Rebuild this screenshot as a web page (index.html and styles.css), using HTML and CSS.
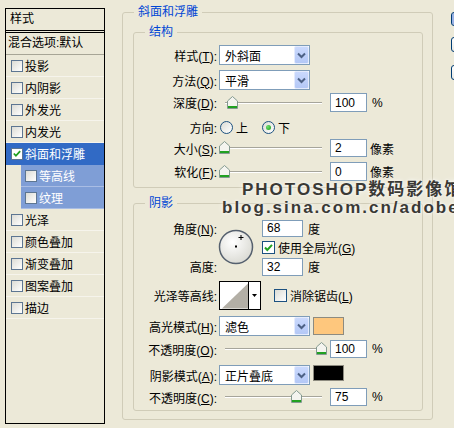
FILE: index.html
```html
<!DOCTYPE html>
<html lang="zh">
<head>
    <meta charset="UTF-8">
    <title>图层样式 - 斜面和浮雕</title>
    <link rel="stylesheet" href="styles.css">
</head>
<body>
    <div class="dialog">
        <!-- 左侧样式列表 -->
        <div class="style-list">
            <div class="list-head">样式</div>
            <div class="list-blend">混合选项:默认</div>
            <div class="list-item"><span class="cb"></span>投影</div>
            <div class="list-item"><span class="cb"></span>内阴影</div>
            <div class="list-item"><span class="cb"></span>外发光</div>
            <div class="list-item"><span class="cb"></span>内发光</div>
            <div class="list-item on">
                <span class="cb checked"><svg width="11" height="11" viewBox="0 0 11 11"><path d="M2 5.5 L4.3 8 L9 2.8" fill="none" stroke="#21a121" stroke-width="2"/></svg></span>斜面和浮雕
            </div>
            <div class="list-item sub"><span class="cb"></span>等高线</div>
            <div class="list-item sub"><span class="cb"></span>纹理</div>
            <div class="list-item"><span class="cb"></span>光泽</div>
            <div class="list-item"><span class="cb"></span>颜色叠加</div>
            <div class="list-item"><span class="cb"></span>渐变叠加</div>
            <div class="list-item"><span class="cb"></span>图案叠加</div>
            <div class="list-item"><span class="cb"></span>描边</div>
        </div>

        <!-- 斜面和浮雕 面板 -->
        <div class="main">
            <fieldset class="group outer">
                <legend>斜面和浮雕</legend>

                <fieldset class="group inner structure">
                    <legend>结构</legend>
                    <div class="row r-style">
                        <span class="lbl">样式(<u>T</u>):</span>
                        <div class="select"><span>外斜面</span><span class="arrow"><svg width="15" height="18" viewBox="0 0 15 18"><path d="M4 7.5 L7.5 11 L11 7.5" fill="none" stroke="#4d6185" stroke-width="2"/></svg></span></div>
                    </div>
                    <div class="row r-method">
                        <span class="lbl">方法(<u>Q</u>):</span>
                        <div class="select"><span>平滑</span><span class="arrow"><svg width="15" height="18" viewBox="0 0 15 18"><path d="M4 7.5 L7.5 11 L11 7.5" fill="none" stroke="#4d6185" stroke-width="2"/></svg></span></div>
                    </div>
                    <div class="row r-depth">
                        <span class="lbl">深度(<u>D</u>):</span>
                        <div class="slider"><span class="track"></span><span class="thumb" style="left: 8px"></span></div>
                        <div class="num">100</div>
                        <span class="unit">%</span>
                    </div>
                    <div class="row r-dir">
                        <span class="lbl">方向:</span>
                        <span class="radio"></span><span class="opt">上</span>
                        <span class="radio checked"></span><span class="opt">下</span>
                    </div>
                    <div class="row r-size">
                        <span class="lbl">大小(<u>S</u>):</span>
                        <div class="slider"><span class="track"></span><span class="thumb" style="left: 0px"></span></div>
                        <div class="num">2</div>
                        <span class="unit px">像素</span>
                    </div>
                    <div class="row r-soft">
                        <span class="lbl">软化(<u>F</u>):</span>
                        <div class="slider"><span class="track"></span><span class="thumb" style="left: 0px"></span></div>
                        <div class="num">0</div>
                        <span class="unit px">像素</span>
                    </div>
                </fieldset>

                <fieldset class="group inner shading">
                    <legend>阴影</legend>
                    <div class="angle-grid">
                        <span class="lbl">角度(<u>N</u>):</span>
                        <div class="dial">
                            <svg width="36" height="36" viewBox="0 0 36 36">
                                <defs>
                                    <radialGradient id="dialFill" cx="40%" cy="35%" r="70%">
                                        <stop offset="0" stop-color="#ffffff"/>
                                        <stop offset="1" stop-color="#d9d9d2"/>
                                    </radialGradient>
                                </defs>
                                <circle cx="18" cy="18" r="16.5" fill="url(#dialFill)" stroke="#55606e" stroke-width="1.5"/>
                                <path d="M23 6 V11 M20.5 8.5 H25.5" stroke="#000" stroke-width="1"/>
                                <rect x="17" y="16.5" width="2" height="2" fill="#000"/>
                            </svg>
                        </div>
                        <div class="cell"><div class="num short">68</div><span class="unit">度</span></div>
                        <div class="cell"><span class="cb dlg checked"><svg width="11" height="11" viewBox="0 0 11 11"><path d="M2 5.5 L4.3 8 L9 2.8" fill="none" stroke="#21a121" stroke-width="2"/></svg></span><span class="cb-text">使用全局光(<u>G</u>)</span></div>
                        <span class="lbl lbl-alt">高度:</span>
                        <div class="cell"><div class="num short tall">32</div><span class="unit">度</span></div>
                    </div>
                    <div class="row r-contour">
                        <span class="lbl">光泽等高线:</span>
                        <div class="contour">
                            <svg width="29" height="27" viewBox="0 0 29 27"><polygon points="2,27 29,27 29,1" fill="#b3afa6"/></svg>
                            <span class="contour-drop"><svg width="11" height="27" viewBox="0 0 11 27"><polygon points="3,12 8,12 5.5,15" fill="#000"/></svg></span>
                        </div>
                        <span class="cb dlg aa"></span><span class="cb-text">消除锯齿(<u>L</u>)</span>
                    </div>
                    <div class="row r-hmode">
                        <span class="lbl">高光模式(<u>H</u>):</span>
                        <div class="select"><span>滤色</span><span class="arrow"><svg width="15" height="18" viewBox="0 0 15 18"><path d="M4 7.5 L7.5 11 L11 7.5" fill="none" stroke="#4d6185" stroke-width="2"/></svg></span></div>
                        <span class="swatch hl"></span>
                    </div>
                    <div class="row r-hop">
                        <span class="lbl">不透明度(<u>O</u>):</span>
                        <div class="slider"><span class="track"></span><span class="thumb" style="left: 97px"></span></div>
                        <div class="num">100</div>
                        <span class="unit">%</span>
                    </div>
                    <div class="row r-smode">
                        <span class="lbl">阴影模式(<u>A</u>):</span>
                        <div class="select"><span>正片叠底</span><span class="arrow"><svg width="15" height="18" viewBox="0 0 15 18"><path d="M4 7.5 L7.5 11 L11 7.5" fill="none" stroke="#4d6185" stroke-width="2"/></svg></span></div>
                        <span class="swatch sh"></span>
                    </div>
                    <div class="row r-sop">
                        <span class="lbl">不透明度(<u>C</u>):</span>
                        <div class="slider"><span class="track"></span><span class="thumb" style="left: 72px"></span></div>
                        <div class="num">75</div>
                        <span class="unit">%</span>
                    </div>
                </fieldset>
            </fieldset>
        </div>

        <!-- 右侧按钮（被裁切） -->
        <div class="buttons">
            <span class="btn default"></span>
            <span class="btn b2"></span>
            <span class="btn b3"></span>
        </div>
    </div>

    <div class="watermark">
        <div class="wm-1">PHOTOSHOP数码影像馆</div>
        <div class="wm-2">blog.sina.com.cn/adobe</div>
    </div>
</body>
</html>
```
FILE: styles.css
```css
body {
    margin: 0;
    width: 454px;
    height: 428px;
    overflow: hidden;
    position: relative;
    background-color: #ece9d8;
    font-family: "Liberation Sans", "Noto Sans CJK SC", sans-serif;
    font-size: 12px;
    color: #000;
}
u {
    text-decoration: underline;
}
.dialog {
    display: flex;
    align-items: flex-start;
    padding: 8px 0 0 5px;
}

/* 左侧样式列表 */
.style-list {
    flex: none;
    width: 100px;
    height: 416px;
    box-sizing: border-box;
    border: 1px solid #000;
}
.list-head {
    height: 21px;
    line-height: 21px;
    padding-left: 4px;
    border-bottom: 3px double #000;
}
.list-blend {
    height: 21px;
    line-height: 21px;
    padding-left: 2px;
    border-bottom: 1px solid #a7a596;
}
.list-item {
    height: 22px;
    box-sizing: border-box;
    display: flex;
    align-items: center;
    padding-left: 5px;
    border-bottom: 1px solid #f6f4ec;
}
.list-item.on {
    background-color: #316ac5;
    color: #fff;
    border-bottom-color: #316ac5;
}
.list-item.sub {
    margin-left: 15px;
    padding-left: 4px;
    background-color: #7f9ed6;
    color: #fff;
    border-bottom-color: #a9bde4;
}
.cb {
    flex: none;
    width: 12px;
    height: 12px;
    box-sizing: border-box;
    margin-right: 2px;
    border: 1px solid #5d7692;
    background: linear-gradient(135deg, #dcdcd5, #ffffff);
    display: flex;
    align-items: center;
    justify-content: center;
}
.cb.checked {
    background: #fff;
}
.cb.dlg {
    width: 13px;
    height: 13px;
    border-color: #1c5180;
    margin-right: 3px;
}

/* 主面板 */
.main {
    margin-left: 17px;
    margin-top: -4px;
}
.group {
    margin: 0;
    min-width: 0;
    border: 1px solid #d0ccb8;
    border-radius: 3px;
}
.group legend {
    padding: 0 4px;
    line-height: 16px;
    color: #0046d5;
}
.outer {
    width: 311px;
    box-sizing: border-box;
    padding: 4px 9px 8px 10px;
}
.outer > legend {
    margin-left: 1px;
}
.inner {
    padding: 0 0 6px 0;
}
.inner > legend {
    margin-left: 11px;
}
.shading {
    margin-top: 7px;
    padding-bottom: 4px;
}

.row {
    display: flex;
    align-items: center;
}
.lbl {
    flex: none;
    width: 83px;
    margin-right: 2px;
    text-align: right;
    white-space: nowrap;
}
.r-style  { margin-top: 5px; height: 20px; }
.r-method { margin-top: 5px; height: 20px; }
.r-depth  { margin-top: 3px; height: 19px; }
.r-dir    { margin-top: 6px; height: 18px; }
.r-size   { margin-top: 3px; height: 18px; }
.r-soft   { margin-top: 5px; height: 19px; }

/* 下拉框 */
.select {
    flex: none;
    width: 91px;
    height: 20px;
    box-sizing: border-box;
    border: 1px solid #7f9db9;
    background: #fff;
    display: flex;
    align-items: center;
    padding-left: 5px;
}
.select .arrow {
    margin-left: auto;
    width: 15px;
    height: 18px;
    box-sizing: border-box;
    border: 1px solid #e4ebfd;
    border-radius: 2px;
    background: linear-gradient(#cad9fd, #b4c8f6);
    display: flex;
}
.select .arrow svg {
    margin: -1px;
}

/* 滑块 */
.slider {
    flex: none;
    position: relative;
    width: 107px;
    height: 100%;
}
.slider .track {
    position: absolute;
    left: 6px;
    right: 4px;
    top: 50%;
    margin-top: -1px;
    height: 0;
    border-top: 1px solid #a6a59b;
    border-bottom: 1px solid #fff;
}
.slider .thumb {
    position: absolute;
    top: 50%;
    margin-top: -7px;
    width: 11px;
    height: 13px;
    background: url("data:image/svg+xml,%3Csvg xmlns='http://www.w3.org/2000/svg' width='11' height='13'%3E%3Cpolygon points='0.5,12.5 0.5,5 5.5,0.5 10.5,5 10.5,12.5' fill='%23f4f4ef' stroke='%23849a90'/%3E%3Crect x='1' y='10' width='9' height='2' fill='%2321a121'/%3E%3C/svg%3E") no-repeat;
}

/* 数值框 */
.num {
    flex: none;
    width: 37px;
    height: 100%;
    box-sizing: border-box;
    margin-left: 4px;
    padding-left: 4px;
    border: 1px solid #7f9db9;
    background: #fff;
    display: flex;
    align-items: center;
}
.unit {
    margin-left: 5px;
}
.unit.px {
    margin-left: 3px;
}

/* 单选 */
.radio {
    flex: none;
    width: 13px;
    height: 13px;
    box-sizing: border-box;
    margin-left: 1px;
    border: 1px solid #1c5180;
    border-radius: 50%;
    background: linear-gradient(135deg, #dcdcd5, #ffffff);
    display: flex;
    align-items: center;
    justify-content: center;
}
.radio.checked::after {
    content: "";
    width: 5px;
    height: 5px;
    border-radius: 50%;
    background: radial-gradient(circle at 35% 35%, #6ee06e, #1a9a1a);
}
.opt {
    margin-left: 3px;
    margin-right: 13px;
}

/* 角度区域 */
.angle-grid {
    display: grid;
    grid-template-columns: 85px 43px auto;
    grid-template-rows: 18px 20px 19px;
    margin-top: 8px;
    align-items: center;
}
.angle-grid .lbl {
    grid-column: 1;
}
.lbl-alt {
    grid-row: 3;
}
.dial {
    grid-column: 2;
    grid-row: 1 / 4;
    align-self: start;
    margin-top: 10px;
    margin-left: -1px;
    height: 36px;
}
.cell {
    grid-column: 3;
    display: flex;
    align-items: center;
    height: 100%;
}
.angle-grid .num {
    margin-left: 0;
}
.num.short {
    width: 41px;
    height: 17px;
}
.num.tall {
    height: 18px;
    margin-top: 1px;
}
.cb-text {
    white-space: nowrap;
}

/* 等高线 */
.r-contour {
    margin-top: 5px;
    height: 29px;
}
.contour {
    flex: none;
    width: 42px;
    height: 29px;
    box-sizing: border-box;
    border: 1px solid #000;
    background: #fff;
    display: flex;
}
.contour-drop {
    border-left: 1px solid #000;
    display: flex;
}
.cb.aa {
    margin-left: 13px;
}

.r-hmode { margin-top: 6px; height: 20px; }
.r-hop   { margin-top: 4px; height: 18px; }
.r-smode { margin-top: 7px; height: 20px; }
.r-sop   { margin-top: 3px; height: 18px; }

.swatch {
    flex: none;
    align-self: flex-start;
    width: 31px;
    margin-left: 3px;
    box-sizing: border-box;
    border: 1px solid #8d8b80;
}
.swatch.hl {
    height: 18px;
    margin-top: 1px;
    background: #fec77d;
}
.swatch.sh {
    height: 16px;
    background: #000;
}

/* 右侧按钮 */
.buttons {
    flex: none;
    display: flex;
    flex-direction: column;
    margin-left: 18px;
}
.btn {
    width: 70px;
    box-sizing: border-box;
    border: 1px solid #003c74;
    border-radius: 3px;
    background: linear-gradient(#ffffff, #e9e8e1);
}
.btn.default {
    margin-top: 4px;
    height: 14px;
    box-shadow: inset 0 0 0 2px #98b0e4;
}
.btn.b2 {
    margin-top: 11px;
    height: 15px;
}
.btn.b3 {
    margin-top: 13px;
    height: 15px;
}

/* 水印 */
.watermark {
    position: absolute;
    left: 222px;
    top: 181px;
    font-family: "Liberation Sans", "Noto Sans CJK SC", sans-serif;
    font-weight: bold;
    font-size: 17px;
    line-height: 18px;
    letter-spacing: 2px;
    color: #3a3935;
    white-space: nowrap;
    text-shadow: 0 0 3px rgba(255, 255, 255, 0.9), 0 0 6px rgba(255, 255, 255, 0.6);
}
.wm-1 {
    padding-left: 20px;
}
```
